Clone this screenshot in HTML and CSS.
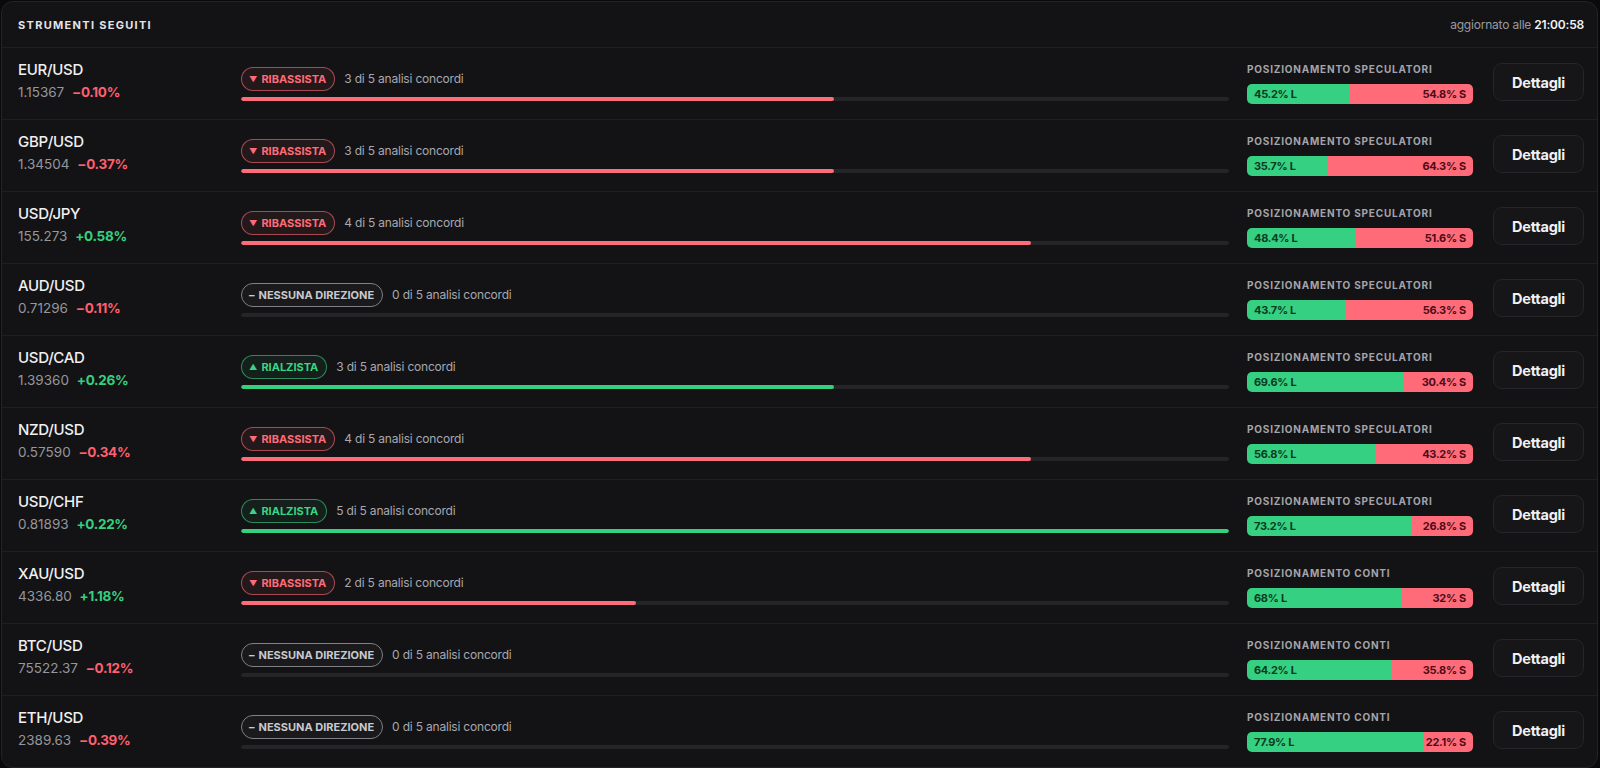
FILE: index.html
```html
<!DOCTYPE html>
<html lang="it">
<head>
<meta charset="utf-8">
<title>Strumenti seguiti</title>
<link rel="stylesheet" href="styles.css">
</head>
<body>
<div class="card">
  <div class="card-head">
    <div class="title">STRUMENTI SEGUITI</div>
    <div class="updated">aggiornato alle <b>21:00:58</b></div>
  </div>

  <div class="row">
    <div class="inst"><div class="name">EUR/USD</div><div class="price">1.15367 <span class="chg dn">−0.10%</span></div></div>
    <div class="trend"><div class="trend-top"><span class="badge dn"><span class="ico">▼</span>RIBASSISTA</span><span class="cnt">3 di 5 analisi concordi</span></div><div class="track"><div class="fill dn" style="width:60%"></div></div></div>
    <div class="pos"><div class="pos-label">POSIZIONAMENTO SPECULATORI</div><div class="dist"><div class="long" style="width:45.2%">45.2% L</div><div class="short">54.8% S</div></div></div>
    <div class="act"><button class="btn">Dettagli</button></div>
  </div>

  <div class="row">
    <div class="inst"><div class="name">GBP/USD</div><div class="price">1.34504 <span class="chg dn">−0.37%</span></div></div>
    <div class="trend"><div class="trend-top"><span class="badge dn"><span class="ico">▼</span>RIBASSISTA</span><span class="cnt">3 di 5 analisi concordi</span></div><div class="track"><div class="fill dn" style="width:60%"></div></div></div>
    <div class="pos"><div class="pos-label">POSIZIONAMENTO SPECULATORI</div><div class="dist"><div class="long" style="width:35.7%">35.7% L</div><div class="short">64.3% S</div></div></div>
    <div class="act"><button class="btn">Dettagli</button></div>
  </div>

  <div class="row">
    <div class="inst"><div class="name">USD/JPY</div><div class="price">155.273 <span class="chg up">+0.58%</span></div></div>
    <div class="trend"><div class="trend-top"><span class="badge dn"><span class="ico">▼</span>RIBASSISTA</span><span class="cnt">4 di 5 analisi concordi</span></div><div class="track"><div class="fill dn" style="width:80%"></div></div></div>
    <div class="pos"><div class="pos-label">POSIZIONAMENTO SPECULATORI</div><div class="dist"><div class="long" style="width:48.4%">48.4% L</div><div class="short">51.6% S</div></div></div>
    <div class="act"><button class="btn">Dettagli</button></div>
  </div>

  <div class="row">
    <div class="inst"><div class="name">AUD/USD</div><div class="price">0.71296 <span class="chg dn">−0.11%</span></div></div>
    <div class="trend"><div class="trend-top"><span class="badge nn"><span class="ico dash">–</span>NESSUNA DIREZIONE</span><span class="cnt">0 di 5 analisi concordi</span></div><div class="track"><div class="fill" style="width:0%"></div></div></div>
    <div class="pos"><div class="pos-label">POSIZIONAMENTO SPECULATORI</div><div class="dist"><div class="long" style="width:43.7%">43.7% L</div><div class="short">56.3% S</div></div></div>
    <div class="act"><button class="btn">Dettagli</button></div>
  </div>

  <div class="row">
    <div class="inst"><div class="name">USD/CAD</div><div class="price">1.39360 <span class="chg up">+0.26%</span></div></div>
    <div class="trend"><div class="trend-top"><span class="badge up"><span class="ico">▲</span>RIALZISTA</span><span class="cnt">3 di 5 analisi concordi</span></div><div class="track"><div class="fill up" style="width:60%"></div></div></div>
    <div class="pos"><div class="pos-label">POSIZIONAMENTO SPECULATORI</div><div class="dist"><div class="long" style="width:69.6%">69.6% L</div><div class="short">30.4% S</div></div></div>
    <div class="act"><button class="btn">Dettagli</button></div>
  </div>

  <div class="row">
    <div class="inst"><div class="name">NZD/USD</div><div class="price">0.57590 <span class="chg dn">−0.34%</span></div></div>
    <div class="trend"><div class="trend-top"><span class="badge dn"><span class="ico">▼</span>RIBASSISTA</span><span class="cnt">4 di 5 analisi concordi</span></div><div class="track"><div class="fill dn" style="width:80%"></div></div></div>
    <div class="pos"><div class="pos-label">POSIZIONAMENTO SPECULATORI</div><div class="dist"><div class="long" style="width:56.8%">56.8% L</div><div class="short">43.2% S</div></div></div>
    <div class="act"><button class="btn">Dettagli</button></div>
  </div>

  <div class="row">
    <div class="inst"><div class="name">USD/CHF</div><div class="price">0.81893 <span class="chg up">+0.22%</span></div></div>
    <div class="trend"><div class="trend-top"><span class="badge up"><span class="ico">▲</span>RIALZISTA</span><span class="cnt">5 di 5 analisi concordi</span></div><div class="track"><div class="fill up" style="width:100%"></div></div></div>
    <div class="pos"><div class="pos-label">POSIZIONAMENTO SPECULATORI</div><div class="dist"><div class="long" style="width:73.2%">73.2% L</div><div class="short">26.8% S</div></div></div>
    <div class="act"><button class="btn">Dettagli</button></div>
  </div>

  <div class="row">
    <div class="inst"><div class="name">XAU/USD</div><div class="price">4336.80 <span class="chg up">+1.18%</span></div></div>
    <div class="trend"><div class="trend-top"><span class="badge dn"><span class="ico">▼</span>RIBASSISTA</span><span class="cnt">2 di 5 analisi concordi</span></div><div class="track"><div class="fill dn" style="width:40%"></div></div></div>
    <div class="pos"><div class="pos-label">POSIZIONAMENTO CONTI</div><div class="dist"><div class="long" style="width:68%">68% L</div><div class="short">32% S</div></div></div>
    <div class="act"><button class="btn">Dettagli</button></div>
  </div>

  <div class="row">
    <div class="inst"><div class="name">BTC/USD</div><div class="price">75522.37 <span class="chg dn">−0.12%</span></div></div>
    <div class="trend"><div class="trend-top"><span class="badge nn"><span class="ico dash">–</span>NESSUNA DIREZIONE</span><span class="cnt">0 di 5 analisi concordi</span></div><div class="track"><div class="fill" style="width:0%"></div></div></div>
    <div class="pos"><div class="pos-label">POSIZIONAMENTO CONTI</div><div class="dist"><div class="long" style="width:64.2%">64.2% L</div><div class="short">35.8% S</div></div></div>
    <div class="act"><button class="btn">Dettagli</button></div>
  </div>

  <div class="row">
    <div class="inst"><div class="name">ETH/USD</div><div class="price">2389.63 <span class="chg dn">−0.39%</span></div></div>
    <div class="trend"><div class="trend-top"><span class="badge nn"><span class="ico dash">–</span>NESSUNA DIREZIONE</span><span class="cnt">0 di 5 analisi concordi</span></div><div class="track"><div class="fill" style="width:0%"></div></div></div>
    <div class="pos"><div class="pos-label">POSIZIONAMENTO CONTI</div><div class="dist"><div class="long" style="width:77.9%">77.9% L</div><div class="short">22.1% S</div></div></div>
    <div class="act"><button class="btn">Dettagli</button></div>
  </div>
</div>
</body>
</html>
```

FILE: styles.css
```css
* { box-sizing: border-box; }
html, body { margin: 0; padding: 0; background: #0a0a0c; }
body {
  padding: 1px 2px 0 1px;
  font-family: Inter, "Noto Sans", "DejaVu Sans", sans-serif;
  color: #ececee;
  height: 768px;
  overflow: hidden;
}
.card {
  background: #131315;
  border: 1px solid #232327;
  border-radius: 12px;
  overflow: hidden;
}
.card-head {
  height: 45px;
  display: flex;
  align-items: center;
  justify-content: space-between;
  padding: 0 13px 0 16px;
}
.title {
  font-size: 11px;
  font-weight: 700;
  letter-spacing: 1.3px;
  color: #e4e4e8;
}
.updated {
  font-size: 12px;
  color: #9a9aa0;
  letter-spacing: -0.2px;
}
.updated b { color: #f2f2f4; font-weight: 600; }

.row {
  height: 72px;
  border-top: 1px solid #1f1f23;
  display: grid;
  grid-template-columns: 205px 1fr 226px 93px;
  column-gap: 18px;
  align-items: center;
  padding: 0 13px 0 16px;
}
.inst { align-self: start; margin-top: 12px; }
.name {
  font-size: 15px;
  line-height: 20px;
  font-weight: 500;
  color: #f0f0f2;
  letter-spacing: -0.3px;
}
.price {
  margin-top: 2px;
  font-size: 13.5px;
  line-height: 20px;
  color: #96969c;
}
.chg { font-weight: 700; margin-left: 4px; letter-spacing: -0.3px; }
.chg.dn { color: #ff5f6e; }
.chg.up { color: #35d07f; }

.trend { display: flex; flex-direction: column; }
.trend-top { display: flex; align-items: center; gap: 9px; }
.badge {
  display: inline-flex;
  align-items: center;
  height: 24px;
  padding: 0 8px 0 7px;
  border-radius: 12px;
  border: 1px solid;
  font-size: 11px;
  font-weight: 700;
  letter-spacing: 0;
}
.badge .ico { font-size: 8px; margin-right: 4px; }
.badge .ico.dash { font-size: 11px; margin-right: 4px; }
.badge.dn { color: #ff6b78; border-color: rgba(255, 107, 120, 0.6); background: rgba(255, 107, 120, 0.07); }
.badge.up { color: #3ad483; border-color: rgba(58, 212, 131, 0.6); background: rgba(58, 212, 131, 0.07); }
.badge.nn { color: #c9c9ce; border-color: #808086; background: rgba(255, 255, 255, 0.03); }
.cnt { font-size: 12px; color: #a8a8ae; letter-spacing: -0.2px; }
.track {
  margin-top: 6px;
  height: 4px;
  border-radius: 2px;
  background: #252528;
  overflow: hidden;
}
.fill { height: 100%; border-radius: 2px; }
.fill.dn { background: #ff6b78; }
.fill.up { background: #35d07f; }

.pos { display: flex; flex-direction: column; }
.pos-label {
  font-size: 10px;
  line-height: 12px;
  font-weight: 700;
  letter-spacing: 0.8px;
  color: #a4a4aa;
}
.dist {
  margin-top: 9px;
  height: 20px;
  border-radius: 5px;
  overflow: hidden;
  display: flex;
  font-size: 11px;
  font-weight: 700;
  letter-spacing: -0.3px;
  line-height: 20px;
}
.long { background: #36d083; color: #0b3a20; padding-left: 7px; white-space: nowrap; }
.short { flex: 1; background: #ff6b78; color: #4d0c16; text-align: right; padding-right: 7px; white-space: nowrap; }

.act { display: flex; justify-content: flex-end; }
.btn {
  width: 91px;
  height: 38px;
  border-radius: 9px;
  border: 1px solid #26262a;
  background: #161618;
  color: #f0f0f2;
  font-family: inherit;
  font-size: 14.5px;
  font-weight: 700;
  letter-spacing: -0.2px;
  margin-top: -3px;
}
```
